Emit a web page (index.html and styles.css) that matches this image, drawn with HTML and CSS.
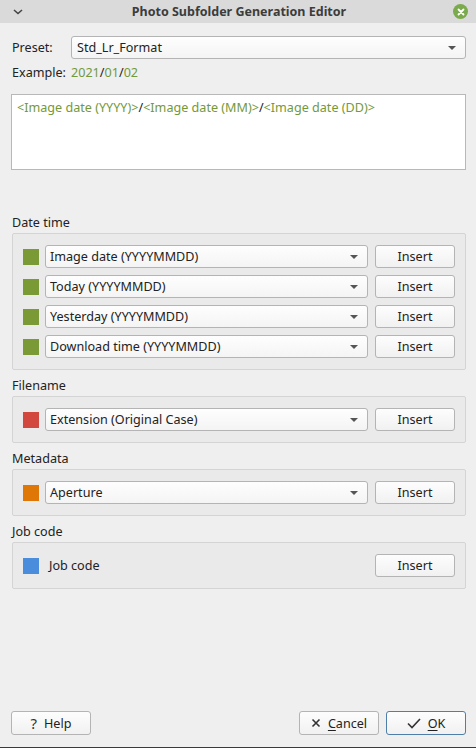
FILE: index.html
```html
<!DOCTYPE html>
<html>
<head>
<meta charset="utf-8">
<link rel="stylesheet" href="styles.css">
</head>
<body>
<div class="window">
  <div class="titlebar">
    <svg class="menu-arrow" width="10" height="6" viewBox="0 0 10 6"><path d="M1 1 L5 4.5 L9 1" fill="none" stroke="#444" stroke-width="1.6"/></svg>
    <span class="title">Photo Subfolder Generation Editor</span>
    <span class="close"><svg width="14" height="14" viewBox="0 0 14 14"><path d="M4.5 4.5 L9.5 9.5 M9.5 4.5 L4.5 9.5" stroke="#fff" stroke-width="1.8" stroke-linecap="round"/></svg></span>
  </div>
  <div class="content">
    <div class="preset-row">
      <span class="lbl">Preset:</span>
      <div class="combo wide"><span>Std_Lr_Format</span><span class="arrow"></span></div>
    </div>
    <div class="example-row">
      <span class="lbl">Example:</span>
      <span class="ex"><span class="g">2021</span>/<span class="g">01</span>/<span class="g">02</span></span>
    </div>
    <div class="editor"><span class="g">&lt;Image date (YYYY)&gt;</span>/<span class="g">&lt;Image date (MM)&gt;</span>/<span class="g">&lt;Image date (DD)&gt;</span></div>

    <div class="section first">
      <div class="sec-title">Date time</div>
      <div class="group">
        <div class="row"><span class="sq green"></span><div class="combo"><span>Image date (YYYYMMDD)</span><span class="arrow"></span></div><button class="btn ins">Insert</button></div>
        <div class="row"><span class="sq green"></span><div class="combo"><span>Today (YYYYMMDD)</span><span class="arrow"></span></div><button class="btn ins">Insert</button></div>
        <div class="row"><span class="sq green"></span><div class="combo"><span>Yesterday (YYYYMMDD)</span><span class="arrow"></span></div><button class="btn ins">Insert</button></div>
        <div class="row"><span class="sq green"></span><div class="combo"><span>Download time (YYYYMMDD)</span><span class="arrow"></span></div><button class="btn ins">Insert</button></div>
      </div>
    </div>

    <div class="section">
      <div class="sec-title">Filename</div>
      <div class="group">
        <div class="row"><span class="sq red"></span><div class="combo"><span>Extension (Original Case)</span><span class="arrow"></span></div><button class="btn ins">Insert</button></div>
      </div>
    </div>

    <div class="section">
      <div class="sec-title">Metadata</div>
      <div class="group">
        <div class="row"><span class="sq orange"></span><div class="combo"><span>Aperture</span><span class="arrow"></span></div><button class="btn ins">Insert</button></div>
      </div>
    </div>

    <div class="section">
      <div class="sec-title">Job code</div>
      <div class="group">
        <div class="row"><span class="sq blue"></span><span class="plain">Job code</span><button class="btn ins">Insert</button></div>
      </div>
    </div>
  </div>
  <div class="footer">
    <button class="btn fbtn"><span class="ico q">?</span><span>Help</span></button>
    <div class="spacer"></div>
    <button class="btn fbtn"><svg class="ico" width="10" height="10" viewBox="0 0 10 10"><path d="M1.5 1.5 L8.5 8.5 M8.5 1.5 L1.5 8.5" stroke="#333" stroke-width="1.6"/></svg><span><u>C</u>ancel</span></button>
    <button class="btn fbtn ok"><svg class="ico" width="14" height="11" viewBox="0 0 14 11"><path d="M1 5.5 L5 9.5 L13 1" fill="none" stroke="#333" stroke-width="1.6"/></svg><span><u>O</u>K</span></button>
  </div>
  <div class="desk"></div>
</div>
</body>
</html>
```
FILE: styles.css
```css
* { box-sizing: border-box; }
html, body { margin: 0; padding: 0; }
body {
  width: 476px;
  height: 748px;
  background: #efefef;
  font-family: "Noto Sans", "DejaVu Sans", sans-serif;
  font-size: 12.6px;
  color: #222;
  overflow: hidden;
}
.window { display: flex; flex-direction: column; height: 748px; }
.titlebar {
  height: 23px;
  background: #dadada;
  display: flex;
  align-items: center;
  padding: 0 8px 0 13px;
  flex: none;
}
.menu-arrow { flex: none; }
.title {
  flex: 1;
  text-align: center;
  font-weight: bold;
  font-size: 12.5px;
  color: #3c3c3c;
  padding-left: 2px;
}
.close {
  width: 15px; height: 15px;
  border-radius: 50%;
  background: #7aaa4c;
  display: flex; align-items: center; justify-content: center;
}
.content { padding: 13px 10px 0 11px; display: flex; flex-direction: column; }
.preset-row { display: flex; align-items: center; height: 23px; }
.lbl { display: inline-block; width: 60px; padding-left: 1px; }
.combo {
  height: 23px;
  border: 1px solid #b4b4b4;
  border-radius: 3px;
  background: linear-gradient(#fefefe, #f4f4f4);
  display: flex; align-items: center;
  padding: 0 9px 0 4px;
  flex: 1;
}
.combo span:first-child { flex: 1; }
.combo.wide { padding-left: 5px; }
.arrow {
  width: 0; height: 0;
  border-left: 4px solid transparent;
  border-right: 4px solid transparent;
  border-top: 4px solid #555;
}
.example-row { display: flex; align-items: center; height: 20px; margin-top: 3px; }
.g { color: #73993a; }
.ex { color: #222; }
.editor {
  margin-top: 12px;
  height: 76px;
  background: #fff;
  border: 1px solid #b8b8b8;
  padding: 4px 5px;
  color: #222;
}
.section { display: flex; flex-direction: column; margin-top: 6px; }
.section.first { margin-top: 43px; }
.sec-title { height: 20px; line-height: 20px; padding-left: 1px; }
.group {
  margin-left: 1px;
  border: 1px solid #d4d4d4;
  border-radius: 2px;
  background: #eaeaea;
  padding: 11px 10px 11px 10px;
  display: flex; flex-direction: column; gap: 7px;
}
.row { display: flex; align-items: center; height: 23px; }
.sq { width: 16px; height: 16px; flex: none; margin-right: 6px; }
.green { background: #799a35; }
.red { background: #d2473e; }
.orange { background: #de7706; }
.blue { background: #4a8ddc; }
.plain { flex: 1; padding-left: 4px; }
.btn {
  font-family: inherit;
  font-size: 12.6px;
  color: #222;
  height: 24px;
  border: 1px solid #b4b4b4;
  border-radius: 3px;
  background: linear-gradient(#fdfdfd, #f1f1f1);
  padding: 0;
  display: flex; align-items: center; justify-content: center;
}
.ins { width: 80px; margin-left: 7px; flex: none; height: 23px; }
.footer {
  margin-top: auto;
  display: flex;
  padding: 0 10px 12px 11px;
  gap: 7px;
  flex: none;
}
.spacer { flex: 1; }
.fbtn { width: 80px; gap: 7px; }
.ok { border-color: #4f7fa8; }
.q { font-size: 15px; color: #333; }
u { text-decoration: underline; text-underline-offset: 2px; }
.desk { height: 1px; background: #3a3a3a; flex: none; }
```
